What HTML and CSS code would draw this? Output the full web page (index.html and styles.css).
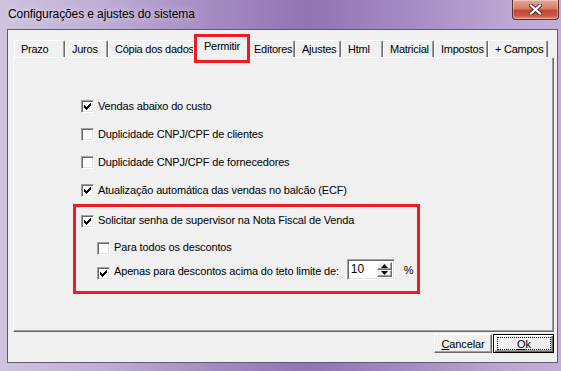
FILE: index.html
```html
<!DOCTYPE html>
<html>
<head>
<meta charset="utf-8">
<link rel="stylesheet" href="styles.css">
</head>
<body>
<div class="window">
  <div class="titlebar">
    <span class="title">Configurações e ajustes do sistema</span>
    <div class="close">
      <svg width="13" height="11" viewBox="0 0 13 11">
        <path d="M2 1.5 L11 9.5 M11 1.5 L2 9.5" stroke="#4a2a2a" stroke-width="4" stroke-linecap="square"/>
        <path d="M2 1.5 L11 9.5 M11 1.5 L2 9.5" stroke="#fff" stroke-width="2.2" stroke-linecap="square"/>
      </svg>
    </div>
  </div>
  <div class="client">
    <div class="tabs">
      <div class="tab">Prazo</div>
      <div class="tab">Juros</div>
      <div class="tab">Cópia dos dados</div>
      <div class="tab active">Permitir</div>
      <div class="tab">Editores</div>
      <div class="tab">Ajustes</div>
      <div class="tab">Html</div>
      <div class="tab">Matricial</div>
      <div class="tab">Impostos</div>
      <div class="tab">+ Campos</div>
    </div>
    <div class="panel">
      <div class="options">
        <div class="row"><span class="cb"><svg class="check" width="7" height="7" viewBox="0 0 7 7"><rect x="6" y="0" width="1" height="1"/><rect x="5" y="1" width="2" height="1"/><rect x="0" y="2" width="1" height="1"/><rect x="4" y="2" width="3" height="1"/><rect x="0" y="3" width="2" height="1"/><rect x="3" y="3" width="3" height="1"/><rect x="0" y="4" width="5" height="1"/><rect x="1" y="5" width="3" height="1"/><rect x="2" y="6" width="1" height="1"/></svg></span><span class="label">Vendas abaixo do custo</span></div>
        <div class="row"><span class="cb"></span><span class="label">Duplicidade CNPJ/CPF de clientes</span></div>
        <div class="row"><span class="cb"></span><span class="label">Duplicidade CNPJ/CPF de fornecedores</span></div>
        <div class="row"><span class="cb"><svg class="check" width="7" height="7" viewBox="0 0 7 7"><rect x="6" y="0" width="1" height="1"/><rect x="5" y="1" width="2" height="1"/><rect x="0" y="2" width="1" height="1"/><rect x="4" y="2" width="3" height="1"/><rect x="0" y="3" width="2" height="1"/><rect x="3" y="3" width="3" height="1"/><rect x="0" y="4" width="5" height="1"/><rect x="1" y="5" width="3" height="1"/><rect x="2" y="6" width="1" height="1"/></svg></span><span class="label">Atualização automática das vendas no balcão (ECF)</span></div>
      </div>
      <div class="group">
        <div class="row"><span class="cb"><svg class="check" width="7" height="7" viewBox="0 0 7 7"><rect x="6" y="0" width="1" height="1"/><rect x="5" y="1" width="2" height="1"/><rect x="0" y="2" width="1" height="1"/><rect x="4" y="2" width="3" height="1"/><rect x="0" y="3" width="2" height="1"/><rect x="3" y="3" width="3" height="1"/><rect x="0" y="4" width="5" height="1"/><rect x="1" y="5" width="3" height="1"/><rect x="2" y="6" width="1" height="1"/></svg></span><span class="label">Solicitar senha de supervisor na Nota Fiscal de Venda</span></div>
        <div class="row sub first"><span class="cb"></span><span class="label">Para todos os descontos</span></div>
        <div class="row sub limit"><span class="cb"><svg class="check" width="7" height="7" viewBox="0 0 7 7"><rect x="6" y="0" width="1" height="1"/><rect x="5" y="1" width="2" height="1"/><rect x="0" y="2" width="1" height="1"/><rect x="4" y="2" width="3" height="1"/><rect x="0" y="3" width="2" height="1"/><rect x="3" y="3" width="3" height="1"/><rect x="0" y="4" width="5" height="1"/><rect x="1" y="5" width="3" height="1"/><rect x="2" y="6" width="1" height="1"/></svg></span><span class="label">Apenas para descontos acima do teto limite de:</span>
          <div class="spin">
            <span class="spin-val">10</span>
            <div class="spin-btns">
              <span class="spin-btn up"><svg width="7" height="4" viewBox="0 0 7 4"><path d="M3.5 0 L7 4 L0 4 Z"/></svg></span>
              <span class="spin-btn down"><svg width="7" height="4" viewBox="0 0 7 4"><path d="M0 0 L7 0 L3.5 4 Z"/></svg></span>
            </div>
          </div>
          <span class="pct">%</span>
        </div>
      </div>
    </div>
    <div class="buttons">
      <button class="btn"><span class="btn-text"><u>C</u>ancelar</span></button>
      <button class="btn default"><span class="focus"><u>O</u>k</span></button>
    </div>
  </div>
  <div class="mark mark-tab"></div>
  <div class="mark mark-group"></div>
</div>
</body>
</html>
```
FILE: styles.css
```css
* { box-sizing: border-box; }
html, body { margin: 0; padding: 0; }
body {
  width: 561px;
  height: 371px;
  overflow: hidden;
  font-family: "Liberation Sans", Arial, sans-serif;
  font-size: 11px;
  letter-spacing: -0.15px;
  color: #000;
}
.window {
  position: relative;
  width: 561px;
  height: 371px;
  padding: 0 3px 8px 7px;
  display: flex;
  flex-direction: column;
  background:
    linear-gradient(to right, #cfc3de 0%, #bfaed6 18%, #a48ac2 38%, #9273b3 55%, #a78ec6 75%, #bba6d2 90%, #c3b0d8 100%);
}
.titlebar {
  height: 29px;
  flex: none;
  display: flex;
  align-items: flex-start;
}
.title {
  font-size: 12px;
  letter-spacing: -0.1px;
  line-height: 15px;
  padding: 7px 0 0 1px;
  color: #000;
  text-shadow: 0 0 6px rgba(255,255,255,0.7);
}
.close {
  margin-left: auto;
  margin-right: -1px;
  width: 47px;
  height: 20px;
  border: 1px solid #5a2c2c;
  border-top: none;
  border-radius: 0 0 4px 4px;
  background: linear-gradient(#e6a898 0%, #d97a67 45%, #c04a33 55%, #c9553f 80%, #de8a73 100%);
  box-shadow: inset 0 0 0 1px rgba(255,255,255,0.35);
  display: flex;
  align-items: center;
  justify-content: center;
}
.client {
  flex: 1;
  border: 1px solid #5f5a6e;
  background: #f0f0f0;
  padding: 7px 3px 0 5px;
  display: flex;
  flex-direction: column;
}
.tabs {
  height: 20px;
  flex: none;
  display: flex;
  align-items: flex-end;
  padding-left: 1px;
}
.tab {
  height: 17px;
  border: 1px solid;
  border-bottom: none;
  border-color: #fff #696969 transparent #fff;
  border-radius: 2px 2px 0 0;
  box-shadow: inset -1px 0 #a0a0a0;
  background: #f0f0f0;
  padding: 2px 0 0 6px;
  line-height: 13px;
  letter-spacing: -0.25px;
  white-space: nowrap;
  flex: none;
}
.tab:nth-child(1) { width: 51px; }
.tab:nth-child(2) { width: 43px; }
.tab:nth-child(3) { width: 87px; }
.tab:nth-child(4) { width: 56px; }
.tab:nth-child(5) { width: 48px; }
.tab:nth-child(6) { width: 46px; }
.tab:nth-child(7) { width: 42px; }
.tab:nth-child(8) { width: 51px; }
.tab:nth-child(9) { width: 54px; }
.tab:nth-child(10) { width: 60px; }
.tab.active {
  height: 21px;
  margin: 0 -2px -1px;
  position: relative;
  z-index: 1;
  padding: 2px 0 0 10px;
}
.panel {
  height: 275px;
  flex: none;
  border: 1px solid;
  border-color: #fff #696969 #696969 #fff;
  box-shadow: inset -1px -1px #a0a0a0;
  padding: 42px 0 0 67px;
}
.options {
  display: flex;
  flex-direction: column;
  gap: 15px;
}
.row {
  display: flex;
  align-items: center;
  height: 13px;
}
.label {
  line-height: 13px;
  white-space: nowrap;
}
.cb {
  width: 13px;
  height: 13px;
  flex: none;
  margin-right: 4px;
  border: 1px solid;
  border-color: #a0a0a0 #fff #fff #a0a0a0;
  box-shadow: inset 1px 1px #696969, inset -1px -1px #e3e3e3;
  background: #fff;
  display: flex;
  align-items: center;
  justify-content: center;
}
.check { fill: #000; shape-rendering: crispEdges; }
.group {
  margin-top: 18px;
  display: flex;
  flex-direction: column;
}
.group .label { position: relative; top: -1px; }
.row.sub { margin-left: 16px; }
.row.first { margin-top: 14px; }
.row.limit {
  margin-top: 4px;
  height: 21px;
  align-items: flex-end;
}
.row.limit .label { margin-bottom: 1px; }
.spin {
  width: 48px;
  height: 21px;
  margin-left: 8px;
  border: 1px solid;
  border-color: #a0a0a0 #fff #fff #a0a0a0;
  box-shadow: inset 1px 1px #696969, inset -1px -1px #e3e3e3;
  background: #fff;
  padding: 2px;
  display: flex;
}
.spin-val {
  flex: 1;
  font-size: 12px;
  letter-spacing: 0;
  line-height: 15px;
  padding-left: 1px;
}
.spin-btns {
  width: 15px;
  display: flex;
  flex-direction: column;
}
.spin-btn {
  flex: 1;
  background: #f0f0f0;
  border: 1px solid;
  border-color: #fff #696969 #696969 #fff;
  box-shadow: inset -1px -1px #a0a0a0;
  display: flex;
  align-items: center;
  justify-content: center;
}
.spin-btn svg { fill: #000; }
.pct {
  margin-left: 9px;
  line-height: 13px;
  margin-bottom: 3px;
}
.buttons {
  display: flex;
  justify-content: flex-end;
  gap: 1px;
  margin-top: 2px;
}
.btn {
  height: 19px;
  font-family: "Liberation Sans", Arial, sans-serif;
  font-size: 11px;
  letter-spacing: -0.1px;
  line-height: 13px;
  color: #000;
  background: #f0f0f0;
  margin: 0;
  display: flex;
  align-items: stretch;
  justify-content: center;
}
.btn:first-child {
  width: 58px;
  border: 1px solid;
  border-color: #fff #696969 #696969 #fff;
  box-shadow: inset -1px -1px #a0a0a0;
  padding: 3px 0 0 0;
}
.btn.default {
  width: 61px;
  border: 1px solid #000;
  box-shadow: inset 1px 1px #fff, inset -1px -1px #696969, inset -2px -2px #a0a0a0;
  padding: 2px 2px 2px 3px;
}
.focus {
  flex: 1;
  border: 1px dotted #000;
  display: flex;
  justify-content: center;
}
.mark {
  position: absolute;
  border: 3px solid #ec1c24;
  pointer-events: none;
}
.mark-tab { left: 194px; top: 34px; width: 56px; height: 29px; z-index: 5; }
.mark-group { left: 73px; top: 204px; width: 347px; height: 90px; }
```
